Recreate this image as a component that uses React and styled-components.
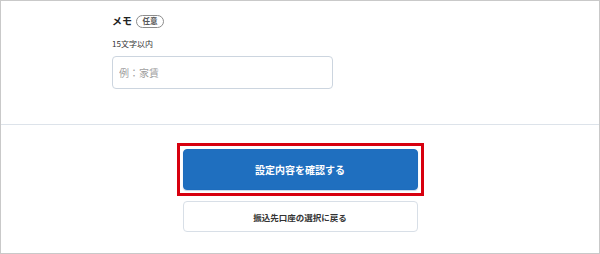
import styled, { createGlobalStyle } from 'styled-components'

const GlobalStyle = createGlobalStyle`
  html, body {
    margin: 0;
    padding: 0;
    background: #ffffff;
  }
  body {
    font-family: "Noto Sans CJK JP", "Noto Sans", sans-serif;
    color: #333333;
  }
  * {
    box-sizing: border-box;
  }
`

const Frame = styled.div`
  width: 600px;
  height: 254px;
  border: 1px solid #c9c9c9;
  display: flex;
  flex-direction: column;
  background: #ffffff;
`

const FormSection = styled.section`
  height: 124px;
  padding: 13px 0 0 111px;
  border-bottom: 1px solid #dde3ea;
  display: flex;
  flex-direction: column;
`

const LabelRow = styled.div`
  display: flex;
  align-items: center;
  gap: 4px;
  height: 14px;
`

const Label = styled.span`
  font-size: 10px;
  font-weight: 700;
  color: #222222;
  line-height: 14px;
`

const Badge = styled.span`
  display: inline-flex;
  align-items: center;
  justify-content: center;
  width: 28px;
  height: 13px;
  border: 1px solid #8c8c8c;
  border-radius: 7px;
  font-size: 7.5px;
  font-weight: 700;
  color: #555555;
  line-height: 1;
`

const Hint = styled.p`
  margin: 10px 0 0;
  font-size: 8px;
  line-height: 12px;
  color: #333333;
`

const TextInput = styled.input`
  margin-top: 6px;
  width: 221px;
  height: 33px;
  padding: 0 0 0 6px;
  border: 1px solid #ccd5df;
  border-radius: 4px;
  font-family: inherit;
  font-size: 10px;
  color: #333333;
  outline: none;

  &::placeholder {
    color: #a0a0a0;
  }
`

const ActionSection = styled.section`
  flex: 1;
  display: flex;
  flex-direction: column;
  align-items: center;
  padding-top: 18px;
`

const Highlight = styled.div`
  border: 3px solid #d7000f;
  padding: 3px;
  display: flex;
`

const Button = styled.button`
  width: 235px;
  height: ${props => (props.$primary ? '41px' : '31px')};
  border-radius: 4px;
  border: 1px solid ${props => (props.$primary ? '#1e6dbd' : '#d8dfe7')};
  background: ${props => (props.$primary ? '#1f6fbf' : '#ffffff')};
  color: ${props => (props.$primary ? '#ffffff' : '#333333')};
  box-shadow: ${props => (props.$primary ? '0 1px 1px rgba(30, 90, 160, 0.25)' : 'none')};
  font-family: inherit;
  font-weight: 700;
  font-size: ${props => (props.$primary ? '10px' : '8.5px')};
  cursor: pointer;
  padding: 0;
`

const BackButton = styled(Button)`
  margin-top: 5px;
`

export default function App() {
  return (
    <>
      <GlobalStyle />
      <Frame>
        <FormSection>
          <LabelRow>
            <Label>メモ</Label>
            <Badge>任意</Badge>
          </LabelRow>
          <Hint>15文字以内</Hint>
          <TextInput type="text" placeholder="例：家賃" />
        </FormSection>
        <ActionSection>
          <Highlight>
            <Button $primary>設定内容を確認する</Button>
          </Highlight>
          <BackButton>振込先口座の選択に戻る</BackButton>
        </ActionSection>
      </Frame>
    </>
  )
}
